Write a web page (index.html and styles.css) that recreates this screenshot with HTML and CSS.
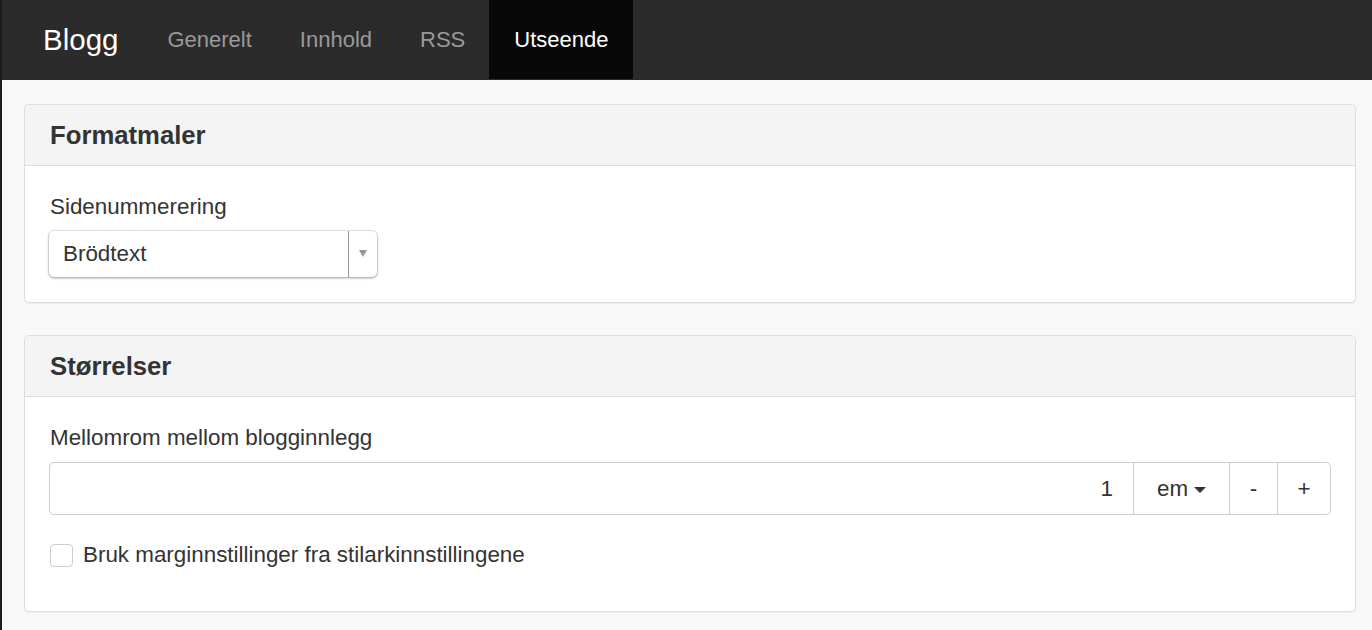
FILE: index.html
```html
<!DOCTYPE html>
<html lang="no">
<head>
    <meta charset="UTF-8">
    <title>Blogg - Utseende</title>
    <link rel="stylesheet" href="styles.css">
</head>
<body>
    <div class="navbar">
        <a class="brand" href="javascript:;">Blogg</a>
        <ul class="nav">
            <li><a href="javascript:;">Generelt</a></li>
            <li><a href="javascript:;">Innhold</a></li>
            <li><a href="javascript:;">RSS</a></li>
            <li class="active"><a href="javascript:;">Utseende</a></li>
        </ul>
    </div>

    <div class="content">
        <div class="panel">
            <div class="panel-heading">Formatmaler</div>
            <div class="panel-body">
                <label class="field-label">Sidenummerering</label>
                <div class="select">
                    <span class="select-value">Brödtext</span>
                    <span class="select-arrow"></span>
                </div>
            </div>
        </div>

        <div class="panel">
            <div class="panel-heading">Størrelser</div>
            <div class="panel-body">
                <label class="field-label">Mellomrom mellom blogginnlegg</label>
                <div class="input-group">
                    <input class="num-input" type="text" value="1">
                    <span class="addon unit">em<span class="caret"></span></span>
                    <span class="addon step">-</span>
                    <span class="addon step plus">+</span>
                </div>
                <label class="check">
                    <span class="check-box"></span>
                    Bruk marginnstillinger fra stilarkinnstillingene
                </label>
            </div>
        </div>
    </div>
</body>
</html>
```

FILE: styles.css
```css
* {
    margin: 0;
    padding: 0;
    list-style: none;
    box-sizing: border-box;
}
body{
    background: #f8f8f8;
    font-family: "Liberation Sans", Arial, sans-serif;
    color: #333;
    border-left: 2px solid #1c1c1c;
    min-height: 630px;
}
a{
    text-decoration: none;
}

/* top bar */
.navbar{
    height: 80px;
    background: #2b2b2b;
    display: flex;
    align-items: stretch;
}
.brand{
    display: flex;
    align-items: center;
    padding: 0 25px 0 41px;
    color: #fff;
    font-size: 29.5px;
}
.nav{
    display: flex;
}
.nav li{
    display: flex;
}
.nav li a{
    display: flex;
    align-items: center;
    padding: 0 24px;
    color: #999;
    font-size: 22px;
}
.nav li.active{
    background: #080808;
    height: 79px;
}
.nav li.active a{
    color: #fff;
    padding: 0 25px;
}

/* panels */
.content{
    padding: 24px 16px 0 22px;
}
.panel{
    background: #fff;
    border: 1px solid #ddd;
    border-radius: 5px;
    margin-bottom: 32px;
    box-shadow: 0 1px 1px rgba(0,0,0,0.04);
}
.panel-heading{
    height: 61px;
    background: #f4f4f4;
    border-bottom: 1px solid #ddd;
    border-radius: 5px 5px 0 0;
    padding: 0 25px;
    display: flex;
    align-items: center;
    font-size: 25.7px;
    font-weight: bold;
}
.panel-body{
    padding: 26px 24px 25px 24px;
}
.field-label{
    display: block;
    font-size: 22.4px;
    line-height: 30px;
    margin-left: 1px;
}

/* select box */
.select{
    margin-top: 9px;
    width: 328px;
    height: 46px;
    background: #fff;
    border-radius: 5px;
    box-shadow: 0 0 0 1px rgba(0,0,0,0.08), 0 1px 3px rgba(0,0,0,0.35);
    display: flex;
    align-items: center;
}
.select-value{
    flex: 1;
    padding-left: 14px;
    font-size: 22.4px;
}
.select-arrow{
    width: 29px;
    height: 100%;
    border-left: 1px solid #999;
    position: relative;
}
.select-arrow:after{
    content: "";
    position: absolute;
    left: 10px;
    top: 19px;
    border-left: 4px solid transparent;
    border-right: 4px solid transparent;
    border-top: 7px solid #999;
}

/* number input with unit and steppers */
.input-group{
    margin-top: 9px;
    display: flex;
    height: 53px;
    border: 1px solid #ccc;
    border-radius: 5px;
}
.num-input{
    flex: 1;
    border: none;
    border-radius: 5px 0 0 5px;
    text-align: right;
    padding-right: 20px;
    font-family: inherit;
    font-size: 22.4px;
    color: #333;
    outline: none;
}
.addon{
    display: flex;
    align-items: center;
    justify-content: center;
    border-left: 1px solid #ccc;
    font-size: 22.4px;
}
.unit{
    width: 96px;
}
.caret{
    margin-left: 6px;
    margin-top: 2px;
    border-left: 6px solid transparent;
    border-right: 6px solid transparent;
    border-top: 6px solid #333;
}
.step{
    width: 48px;
}
.plus{
    width: 53px;
}

/* checkbox row */
.check{
    display: flex;
    align-items: center;
    margin-top: 25px;
    margin-bottom: 16px;
    font-size: 22.4px;
    line-height: 30px;
}
.check-box{
    width: 23px;
    height: 23px;
    border: 1px solid #ccc;
    border-radius: 4px;
    background: #fff;
    margin-left: 1px;
    margin-right: 10px;
}
```
